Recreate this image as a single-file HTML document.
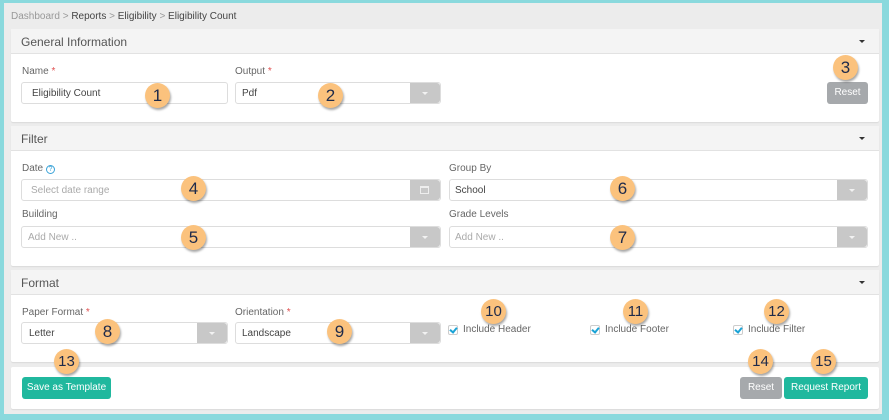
<!DOCTYPE html>
<html><head><meta charset="utf-8"><style>
*{box-sizing:border-box;margin:0;padding:0}
body{width:889px;height:420px;overflow:hidden;background:#8ad9dd;font-family:"Liberation Sans",sans-serif;font-size:10px;color:#555;position:relative}
#frame{position:absolute;left:4px;top:3px;width:878px;height:411px;background:#ececec}
.a{position:absolute}
.crumb{font-size:10px;color:#444}
.crumb .g{color:#999}
.panel{position:absolute;left:11px;width:868px;background:#fff;border-radius:2px;box-shadow:0 1px 1px rgba(0,0,0,.08)}
.ph{height:25px;background:#f4f4f4;border-bottom:1px solid #e2e2e2;padding:6px 10px;font-size:12px;color:#555;position:relative}
.ph:after{content:"";position:absolute;right:14px;top:11px;border-left:3px solid transparent;border-right:3px solid transparent;border-top:3px solid #333}
.lbl{position:absolute;font-size:10px;color:#666}
.req{color:#e05050}
.inp{position:absolute;height:22px;border:1px solid #ddd;border-radius:3px;background:#fff;font-size:10px;color:#444;padding:5px 9px}
.ph2{color:#aaa}
.btn{position:absolute;top:0;right:0;bottom:0;width:30px;background:#c8c8c8;border-radius:0 3px 3px 0}
.btn.c:after{content:"";position:absolute;left:12px;top:9px;border-left:3px solid transparent;border-right:3px solid transparent;border-top:3px solid #f2f2f2}
.badge{position:absolute;width:25px;height:25px;border-radius:50%;background:#fbc27d;box-shadow:1px 2px 2px rgba(0,0,0,.35);color:#1e2a4a;font-size:17px;text-align:center;line-height:25px}
.badge.s{font-size:15px}
.gbtn{position:absolute;height:22px;background:#a6a9ac;color:#fff;border-radius:3px;font-size:10px;text-align:center;line-height:22px}
.tbtn{position:absolute;height:22px;background:#20b89e;color:#fff;border-radius:3px;font-size:10px;text-align:center;line-height:22px}
.cb{position:absolute;width:10px;height:10px;border:1px solid #ccc;border-radius:2px;background:#fff}
.cb:after{content:"";position:absolute;left:2px;top:0px;width:3px;height:5px;border:solid #1aa3d6;border-width:0 2px 2px 0;transform:rotate(40deg)}
.cl{position:absolute;font-size:10px;color:#666}
</style></head><body>
<div id="frame"></div>
<div class="a crumb" style="left:11px;top:11px"><span class="g">Dashboard</span> <span class="g">&gt;</span> Reports <span class="g">&gt;</span> Eligibility <span class="g">&gt;</span> Eligibility Count</div>

<div class="panel" style="top:29px;height:93px"><div class="ph">General Information</div></div>
<div class="panel" style="top:126px;height:140px"><div class="ph">Filter</div></div>
<div class="panel" style="top:270px;height:92px"><div class="ph">Format</div></div>
<div class="panel" style="top:367px;height:42px"></div>

<div class="lbl" style="left:22px;top:66px">Name <span class="req">*</span></div>
<div class="inp" style="left:21px;top:82px;width:207px;padding-left:10px">Eligibility Count</div>
<div class="lbl" style="left:235px;top:66px">Output <span class="req">*</span></div>
<div class="inp" style="left:235px;top:82px;width:206px;padding-left:6px">Pdf<div class="btn c"></div></div>
<div class="gbtn" style="left:827px;top:82px;width:41px">Reset</div>

<div class="lbl" style="left:22px;top:163px">Date <span style="display:inline-block;width:9px;height:9px;border:1px solid #3aa3d8;border-radius:50%;color:#3aa3d8;font-size:7px;line-height:7px;text-align:center">?</span></div>
<div class="inp ph2" style="left:21px;top:179px;width:420px;padding-left:9px">Select date range<div class="btn"><div style="position:absolute;left:10px;top:6px;width:9px;height:8px;border:1px solid #eee;border-top-width:2px"></div></div></div>
<div class="lbl" style="left:22px;top:209px">Building</div>
<div class="inp ph2" style="left:21px;top:226px;width:420px;padding-left:6px">Add New ..<div class="btn c"></div></div>
<div class="lbl" style="left:449px;top:163px">Group By</div>
<div class="inp" style="left:449px;top:179px;width:419px;padding-left:5px">School<div class="btn c"></div></div>
<div class="lbl" style="left:449px;top:209px">Grade Levels</div>
<div class="inp ph2" style="left:449px;top:226px;width:419px;padding-left:5px">Add New ..<div class="btn c"></div></div>

<div class="lbl" style="left:22px;top:307px">Paper Format <span class="req">*</span></div>
<div class="inp" style="left:21px;top:322px;width:207px;padding-left:7px">Letter<div class="btn c"></div></div>
<div class="lbl" style="left:235px;top:307px">Orientation <span class="req">*</span></div>
<div class="inp" style="left:235px;top:322px;width:206px;padding-left:6px">Landscape<div class="btn c"></div></div>
<div class="cb" style="left:448px;top:325px"></div><div class="cl" style="left:463px;top:324px">Include Header</div>
<div class="cb" style="left:590px;top:325px"></div><div class="cl" style="left:605px;top:324px">Include Footer</div>
<div class="cb" style="left:733px;top:325px"></div><div class="cl" style="left:748px;top:324px">Include Filter</div>

<div class="tbtn" style="left:22px;top:377px;width:89px">Save as Template</div>
<div class="gbtn" style="left:740px;top:377px;width:42px">Reset</div>
<div class="tbtn" style="left:784px;top:377px;width:84px">Request Report</div>

<div class="badge" style="left:145px;top:83px">1</div>
<div class="badge" style="left:318px;top:83px">2</div>
<div class="badge" style="left:833px;top:55px">3</div>
<div class="badge" style="left:181px;top:176px">4</div>
<div class="badge" style="left:181px;top:225px">5</div>
<div class="badge" style="left:610px;top:176px">6</div>
<div class="badge" style="left:610px;top:225px">7</div>
<div class="badge" style="left:95px;top:319px">8</div>
<div class="badge" style="left:327px;top:319px">9</div>
<div class="badge s" style="left:481px;top:299px">10</div>
<div class="badge s" style="left:623px;top:299px">11</div>
<div class="badge s" style="left:764px;top:299px">12</div>
<div class="badge s" style="left:54px;top:349px">13</div>
<div class="badge s" style="left:748px;top:349px">14</div>
<div class="badge s" style="left:811px;top:349px">15</div>
</body></html>
